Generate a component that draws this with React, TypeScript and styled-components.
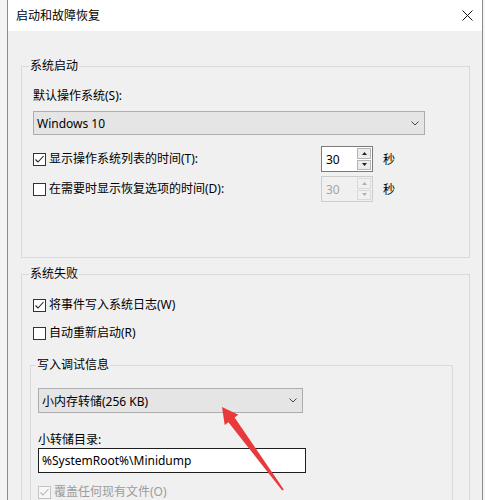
import React from "react";
import styled, { createGlobalStyle } from "styled-components";

const GlobalStyle = createGlobalStyle`
  html, body { margin: 0; padding: 0; background: #f4f4f4; }
  body {
    font-family: "Noto Sans", "Noto Sans CJK SC", sans-serif;
    font-size: 12px;
    color: #000;
  }
`;

const Page = styled.div`
  position: relative;
  width: 485px;
  height: 500px;
  overflow: hidden;
`;

const Dialog = styled.div`
  margin-left: 7px;
  width: 476px;
  height: 500px;
  box-sizing: border-box;
  border-left: 1px solid #8c8c8c;
  border-right: 1px solid #8c8c8c;
  background: #f0f0f0;
  display: flex;
  flex-direction: column;
`;

const TitleBar = styled.div`
  height: 31px;
  flex: none;
  background: #fff;
  display: flex;
  align-items: center;
  justify-content: space-between;
  padding: 0 9px 0 8px;
  line-height: 16px;
`;

const Body = styled.div`
  padding: 27px 12px 0 13px;
  display: flex;
  flex-direction: column;
`;

const Group = styled.fieldset<{ $top?: number; $left?: number; $width?: number }>`
  margin: ${(p) => p.$top ?? 0}px 0 0 ${(p) => p.$left ?? 0}px;
  padding: 0;
  border: 1px solid #dadada;
  min-width: 0;
  width: ${(p) => (p.$width ? `${p.$width}px` : "auto")};
  box-sizing: border-box;
`;

const Legend = styled.legend<{ $offset: number }>`
  margin-left: ${(p) => p.$offset}px;
  padding: 0 1px;
  line-height: 16px;
`;

const GroupBody = styled.div<{ $pad: string }>`
  padding: ${(p) => p.$pad};
  display: flex;
  flex-direction: column;
`;

const Label = styled.div<{ $top?: number }>`
  line-height: 16px;
  margin-top: ${(p) => p.$top ?? 0}px;
`;

const Select = styled.div<{ $width: number; $height: number; $top: number }>`
  width: ${(p) => p.$width}px;
  height: ${(p) => p.$height}px;
  margin-top: ${(p) => p.$top}px;
  box-sizing: border-box;
  background: #e5e5e5;
  border: 1px solid #adadad;
  padding: 0 5px 0 3px;
  display: flex;
  align-items: center;
  justify-content: space-between;
`;

const Row = styled.div<{ $top: number }>`
  margin-top: ${(p) => p.$top}px;
  height: 26px;
  display: grid;
  grid-template-columns: 278px 52px auto;
  column-gap: 10px;
  align-items: center;
`;

const CheckRow = styled.label<{ $top: number; $disabled?: boolean }>`
  margin-top: ${(p) => p.$top}px;
  height: 16px;
  display: flex;
  align-items: center;
  gap: 3px;
  line-height: 16px;
  color: ${(p) => (p.$disabled ? "#9c9c9c" : "#000")};
`;

const Box = styled.span<{ $disabled?: boolean }>`
  width: 13px;
  height: 13px;
  box-sizing: border-box;
  border: 1px solid ${(p) => (p.$disabled ? "#c3c3c3" : "#333")};
  background: ${(p) => (p.$disabled ? "#f7f7f7" : "#fff")};
  display: flex;
  flex: none;
`;

const Spinner = styled.div<{ $disabled?: boolean }>`
  width: 52px;
  height: 26px;
  box-sizing: border-box;
  border: 1px solid ${(p) => (p.$disabled ? "#cccccc" : "#7a7a7a")};
  background: ${(p) => (p.$disabled ? "#f0f0f0" : "#fff")};
  color: ${(p) => (p.$disabled ? "#a5a5a5" : "#000")};
  display: flex;
`;

const SpinText = styled.div`
  flex: 1;
  padding-left: 4px;
  display: flex;
  align-items: center;
`;

const SpinButtons = styled.div`
  width: 15px;
  padding: 1px 1px 1px 0;
  box-sizing: border-box;
  display: flex;
  flex-direction: column;
  gap: 1px;
`;

const SpinButton = styled.div<{ $disabled?: boolean }>`
  flex: 1;
  box-sizing: border-box;
  border: 1px solid ${(p) => (p.$disabled ? "#dadada" : "#b4b4b4")};
  background: ${(p) => (p.$disabled ? "#f0f0f0" : "#ececec")};
  display: flex;
  align-items: center;
  justify-content: center;
`;

const TextInput = styled.div`
  margin-top: 0;
  width: 268px;
  height: 25px;
  box-sizing: border-box;
  border: 1px solid #1e1e1e;
  background: #fff;
  padding-left: 3px;
  display: flex;
  align-items: center;
`;

const ArrowLayer = styled.svg`
  position: absolute;
  left: 0;
  top: 0;
  pointer-events: none;
`;

const Chevron = () => (
  <svg width="8" height="5" viewBox="0 0 8 5">
    <polyline points="0.5,0.5 4,4 7.5,0.5" fill="none" stroke="#444" strokeWidth="1" />
  </svg>
);

const Check = ({ color }: { color: string }) => (
  <svg width="11" height="11" viewBox="0 0 11 11">
    <polyline points="1.5,5.5 4,8 9.5,2" fill="none" stroke={color} strokeWidth="1.1" />
  </svg>
);

const Tri = ({ up, color }: { up: boolean; color: string }) => (
  <svg width="5" height="3" viewBox="0 0 5 3">
    <polygon points={up ? "2.5,0 5,3 0,3" : "0,0 5,0 2.5,3"} fill={color} />
  </svg>
);

const CheckBox = ({ checked, disabled }: { checked?: boolean; disabled?: boolean }) => (
  <Box $disabled={disabled}>{checked && <Check color={disabled ? "#b5b5b5" : "#222"} />}</Box>
);

const Spin = ({ value, disabled }: { value: string; disabled?: boolean }) => {
  const c = disabled ? "#b0b0b0" : "#222";
  return (
    <Spinner $disabled={disabled}>
      <SpinText>{value}</SpinText>
      <SpinButtons>
        <SpinButton $disabled={disabled}>
          <Tri up color={c} />
        </SpinButton>
        <SpinButton $disabled={disabled}>
          <Tri up={false} color={c} />
        </SpinButton>
      </SpinButtons>
    </Spinner>
  );
};

export default function App() {
  return (
    <Page>
      <GlobalStyle />
      <Dialog>
        <TitleBar>
          <span>启动和故障恢复</span>
          <svg width="11" height="11" viewBox="0 0 11 11">
            <path d="M0.5 0.5 L10.5 10.5 M10.5 0.5 L0.5 10.5" stroke="#111" strokeWidth="1" />
          </svg>
        </TitleBar>
        <Body>
          <Group>
            <Legend $offset={7}>系统启动</Legend>
            <GroupBody $pad="14px 11px 55px 11px">
              <Label>默认操作系统(S):</Label>
              <Select $width={392} $height={24} $top={7}>
                <span>Windows 10</span>
                <Chevron />
              </Select>
              <Row $top={11}>
                <CheckRow $top={0}>
                  <CheckBox checked />
                  显示操作系统列表的时间(T):
                </CheckRow>
                <Spin value="30" />
                <span>秒</span>
              </Row>
              <Row $top={4}>
                <CheckRow $top={0}>
                  <CheckBox />
                  在需要时显示恢复选项的时间(D):
                </CheckRow>
                <Spin value="30" disabled />
                <span>秒</span>
              </Row>
            </GroupBody>
          </Group>
          <Group $top={8}>
            <Legend $offset={7}>系统失败</Legend>
            <GroupBody $pad="15px 11px 40px 11px">
              <CheckRow $top={0}>
                <CheckBox checked />
                将事件写入系统日志(W)
              </CheckRow>
              <CheckRow $top={12}>
                <CheckBox />
                自动重新启动(R)
              </CheckRow>
              <Group $top={16} $left={-3} $width={423}>
                <Legend $offset={5}>写入调试信息</Legend>
                <GroupBody $pad="15px 7px 40px 7px">
                  <Select $width={265} $height={25} $top={0}>
                    <span>小内存转储(256 KB)</span>
                    <Chevron />
                  </Select>
                  <Label $top={19}>小转储目录:</Label>
                  <TextInput>%SystemRoot%\Minidump</TextInput>
                  <CheckRow $top={11} $disabled>
                    <CheckBox checked disabled />
                    覆盖任何现有文件(O)
                  </CheckRow>
                </GroupBody>
              </Group>
            </GroupBody>
          </Group>
        </Body>
      </Dialog>
      <ArrowLayer width="485" height="500" viewBox="0 0 485 500">
        <polygon
          points="222,407 238.3,414.8 234.6,417.6 283.8,489.4 282.2,490.6 228.4,422.2 224.7,425"
          fill="#e83a3a"
        />
      </ArrowLayer>
    </Page>
  );
}
